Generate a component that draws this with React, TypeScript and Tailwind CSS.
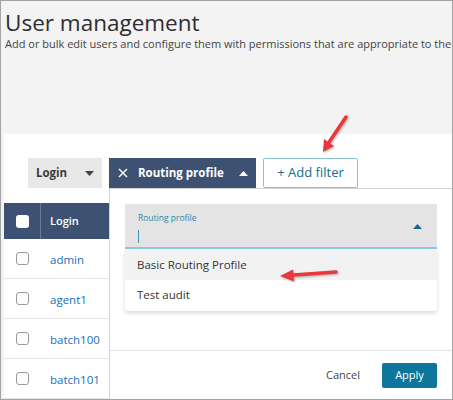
import React from 'react';

const rows = ['admin', 'agent1', 'batch100', 'batch101'];

const Caret: React.FC<{ up?: boolean; className?: string }> = ({ up, className }) => (
  <svg width="9" height="5" viewBox="0 0 9 5" className={className}>
    <polygon points={up ? '0,5 4.5,0 9,5' : '0,0 9,0 4.5,5'} fill="currentColor" />
  </svg>
);

const Arrows: React.FC = () => (
  <svg
    className="absolute left-[-1px] top-[-1px] pointer-events-none drop-shadow-[1px_1px_1px_rgba(0,0,0,0.3)]"
    width="453"
    height="400"
    viewBox="0 0 453 400"
  >
    <line x1="346" y1="117" x2="329.5" y2="141.5" stroke="#e8383d" strokeWidth="3.5" strokeLinecap="round" />
    <polygon points="323,152 334,146 324,139" fill="#e8383d" />
    <line x1="336" y1="272" x2="294" y2="275" stroke="#e8383d" strokeWidth="3.5" strokeLinecap="round" />
    <polygon points="280,276 294,281.5 293,269.5" fill="#e8383d" />
  </svg>
);

export default function App() {
  return (
    <div className="relative w-[453px] h-[400px] overflow-hidden border border-[#a3a3a3] bg-[#f3f3f3] font-['Open_Sans',sans-serif] text-[#333]">
      <div className="h-[133px] pl-[4px] pt-[9px]">
        <h1 className="text-[22.5px] leading-[26px] text-[#2e2e2e] whitespace-nowrap">User management</h1>
        <p className="mt-[1px] text-[11px] leading-[14px] text-[#444] whitespace-nowrap">
          Add or bulk edit users and configure them with permissions that are appropriate to their role.
        </p>
      </div>

      <div className="ml-[3px] h-[265px] bg-white">
        <div className="flex items-center pt-[24px] pl-[24px] gap-[7px]">
          <div className="flex h-[30px] w-[74px] items-center justify-between bg-[#e8e8e8] pl-[8px] pr-[8px]">
            <span className="text-[11.5px] font-bold text-[#3a3a3a]">Login</span>
            <Caret className="text-[#444]" />
          </div>
          <div className="flex h-[30px] w-[147px] items-center bg-[#3d5272] pl-[9px] pr-[8px] text-white">
            <svg width="10" height="10" viewBox="0 0 10 10">
              <path d="M1 1L9 9M9 1L1 9" stroke="white" strokeWidth="1.4" />
            </svg>
            <span className="ml-[10px] text-[11.5px] font-bold">Routing profile</span>
            <Caret up className="ml-auto text-white" />
          </div>
          <div className="flex h-[30px] w-[95px] items-center justify-center border border-[#86c3d6] rounded-[2px] bg-white text-[13px] text-[#106f8f]">
            + Add filter
          </div>
        </div>

        <div className="mt-[15px]">
          <div className="flex h-[36px] items-center bg-[#3d5272] text-white">
            <div className="flex h-full w-[37px] items-center pl-[12px] border-r border-[#6b7b93]">
              <div className="h-[13px] w-[13px] rounded-[3px] bg-white" />
            </div>
            <span className="pl-[9px] text-[11px] font-semibold">Login</span>
          </div>
          {rows.map((r) => (
            <div key={r} className="flex h-[40px] items-center border-b border-[#e4e4e4]">
              <div className="flex w-[37px] pl-[12px]">
                <div className="h-[13px] w-[13px] rounded-[3px] border border-[#9a9a9a] bg-white" />
              </div>
              <span className="pl-[9px] pt-[2px] text-[11.5px] text-[#1a6cbf]">{r}</span>
            </div>
          ))}
        </div>
      </div>

      <div className="absolute left-[108px] top-[187px] right-0 bottom-0 flex flex-col border-l border-t border-[#d2d2d2] bg-white">
        <div className="px-[15px] pl-[15px] pt-[15px]">
          <div className="relative h-[45px] bg-[#e4e4e4] border-b-2 border-[#86c7dc] pl-[13px]">
            <div className="pt-[8px] text-[8.5px] leading-[12px] text-[#2b89aa]">Routing profile</div>
            <div className="mt-[6px] h-[13px] w-[1px] bg-[#3a95b3]" />
            <Caret up className="absolute right-[15px] top-[20px] text-[#0b6f93]" />
          </div>
          <div className="rounded-b-[3px] bg-white shadow-[0_2px_4px_rgba(0,0,0,0.15)]">
            <div className="flex h-[31px] items-center bg-[#f2f2f2] pl-[12px] text-[11.5px] text-[#333]">Basic Routing Profile</div>
            <div className="flex h-[31px] items-center pb-[2px] pl-[12px] text-[11.5px] text-[#333]">Test audit</div>
          </div>
        </div>
        <div className="mt-[39px] flex items-center justify-end gap-[22px] border-t border-[#e2e2e2] pt-[12px] pr-[15px]">
          <span className="text-[11px] text-[#444]">Cancel</span>
          <div className="flex h-[25px] w-[55px] items-center justify-center rounded-[2px] bg-[#0e769b] text-[11px] text-white">
            Apply
          </div>
        </div>
      </div>

      <Arrows />
    </div>
  );
}
